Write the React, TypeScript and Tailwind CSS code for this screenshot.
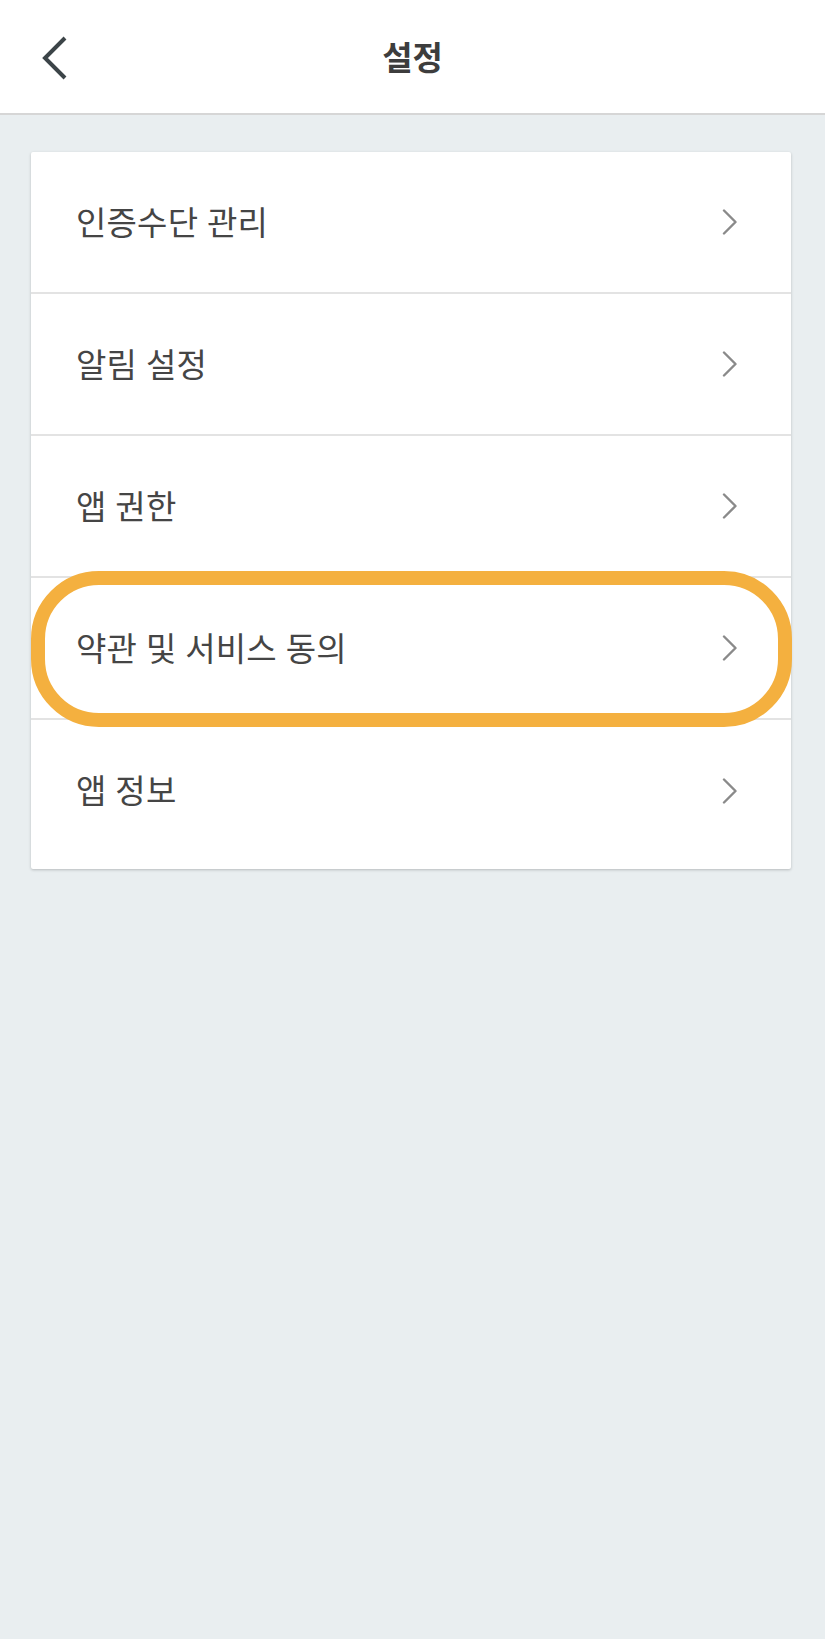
import React from "react";

const items = ["인증수단 관리", "알림 설정", "앱 권한", "약관 및 서비스 동의", "앱 정보"];

const ChevronRight = () => (
  <svg width="16" height="26" viewBox="0 0 16 26" fill="none">
    <path d="M2 1.5 L13.5 13 L2 24.5" stroke="#8a8a8a" strokeWidth="2.4" strokeLinecap="round" strokeLinejoin="round" />
  </svg>
);

const SettingsRow: React.FC<{ label: string; highlighted?: boolean; last?: boolean }> = ({
  label,
  highlighted,
  last,
}) => (
  <div
    className={
      "relative flex items-center justify-between pl-[45px] pr-[53px] " +
      (last ? "h-[149px] pb-[8px]" : "h-[142px] border-b-2 border-[#e3e3e3]")
    }
  >
    <span className="text-[33px] leading-none text-[#454545] tracking-[0.2px]">{label}</span>
    <ChevronRight />
    {highlighted && (
      <div className="absolute -top-[7px] -bottom-[9px] left-0 -right-[1px] rounded-[68px] border-[14px] border-[#f4b03f] pointer-events-none" />
    )}
  </div>
);

export default function App() {
  return (
    <div
      className="min-h-[1639px] w-[825px] bg-[#e9eef0]"
      style={{ fontFamily: '"Noto Sans", "Noto Sans CJK KR", sans-serif' }}
    >
      <header className="relative flex h-[115px] items-center justify-center bg-white border-b-2 border-[#d6d6d6]">
        <button className="absolute left-[40px] top-[35px]">
          <svg width="28" height="46" viewBox="0 0 28 46" fill="none">
            <path d="M25 3 L5 23 L25 43" stroke="#3c4448" strokeWidth="4" strokeLinejoin="miter" />
          </svg>
        </button>
        <h1 className="text-[33px] font-bold text-[#3d3d3d] leading-none pt-[2px]">설정</h1>
      </header>

      <div className="ml-[31px] mt-[37px] w-[760px] bg-white shadow-[0_1px_3px_rgba(0,0,0,0.22)] rounded-[2px]">
        {items.map((label, i) => (
          <SettingsRow key={label} label={label} highlighted={i === 3} last={i === items.length - 1} />
        ))}
      </div>
    </div>
  );
}
